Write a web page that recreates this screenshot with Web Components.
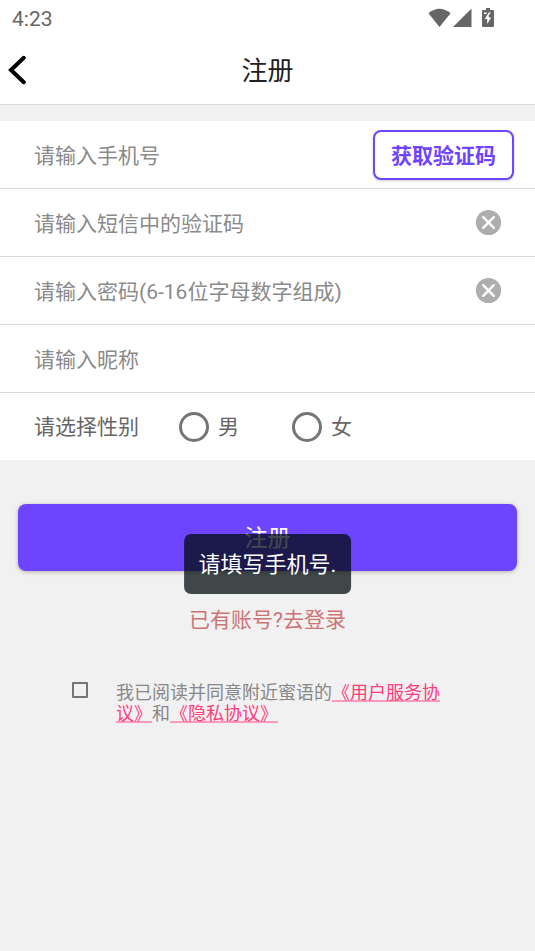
<!DOCTYPE html>
<html lang="zh-CN">
<head>
<meta charset="utf-8">
<meta name="viewport" content="width=device-width, initial-scale=1">
<title>注册</title>
<style>
  html { height: 100%; }
  body {
    margin: 0;
    min-height: 100%;
    background: #f1f1f1;
    color: #757575;
    font: 400 21px/30px Roboto, "Noto Sans CJK SC", sans-serif;
    --accent: #6e44ff;
    --line: #dadada;
  }
</style>
</head>
<body>
<register-page></register-page>

<script>
const define = (name, html, setup) => {
  const template = document.createElement('template');
  template.innerHTML = html;
  customElements.define(name, class extends HTMLElement {
    constructor() {
      super();
      this.attachShadow({ mode: 'open' }).append(template.content.cloneNode(true));
    }
    connectedCallback() {
      if (setup) setup(this, this.shadowRoot);
    }
  });
};

define('status-bar', `
  <style>
    :host { display: flex; align-items: center; justify-content: space-between; height: 36px; padding: 0 41px 0 12px; color: #666; font-size: 21px; }
    time { padding-top: 2px; }
    .icons { display: flex; align-items: center; gap: 2px; }
    svg { display: block; fill: currentColor; }
    .battery { margin-left: 8px; }
  </style>
  <time>4:23</time>
  <div class="icons">
    <svg width="23" height="20" viewBox="0 0 23 20" aria-label="Wi-Fi"><path d="M0.4 5.2Q11.5-3.8 22.6 5.2L11.5 19Z"/></svg>
    <svg width="19" height="20" viewBox="0 0 19 20" aria-label="信号"><path d="M18.5 0.5V19H0Z"/></svg>
    <svg class="battery" width="12" height="20" viewBox="0 0 12 20" aria-label="充电中"><path fill-rule="evenodd" d="M4 0H8V2H11Q12 2 12 3V18Q12 19 11 19H1Q0 19 0 18V3Q0 2 1 2H4ZM2 4.5V6H4.6V4.5ZM6.8 4.5L2.8 11H5.2V16L9.2 9.5H6.8V7L9 4.5Z"/></svg>
  </div>`);

define('nav-header', `
  <style>
    :host { display: grid; grid-template-columns: 48px 1fr 48px; align-items: center; height: 68px; border-bottom: 1px solid var(--line); }
    button { display: flex; align-items: center; height: 48px; padding: 0 0 0 8px; border: 0; background: none; color: #000; }
    h1 { margin: 0; padding-top: 2px; text-align: center; font-size: 26px; line-height: 36px; font-weight: inherit; color: #212121; }
  </style>
  <button type="button" aria-label="返回"><svg width="20" height="30" viewBox="0 0 20 30" fill="none" stroke="currentColor" stroke-width="4" stroke-linecap="round"><path d="M15.8 2.8L3 15L15.8 27.2"/></svg></button>
  <h1><slot></slot></h1>`);

define('form-row', `
  <style>
    :host { display: flex; align-items: center; height: 67px; padding: 0 21px 0 34px; background: #fff; border-bottom: 1px solid var(--line); }
    :host(:last-of-type) { border-bottom: 0; }
  </style>
  <slot></slot>`);

define('text-field', `
  <style>
    :host { display: flex; flex: 1; align-items: center; min-width: 0; }
    input { flex: 1; min-width: 0; height: 48px; padding: 2px 0 0; border: 0; outline: 0; background: none; font: inherit; color: #333; }
    input::placeholder { color: #8a8a8a; opacity: 1; }
    button { display: none; padding: 0; margin-right: 12px; border: 0; background: none; }
    :host([clearable]) button { display: block; }
    svg { display: block; }
  </style>
  <input>
  <button type="button" aria-label="清除"><svg width="27" height="27" viewBox="0 0 27 27"><circle cx="13.5" cy="13.5" r="12.6" fill="#aeaeae"/><path d="M8.2 8.2L18.8 18.8M18.8 8.2L8.2 18.8" stroke="#fff" stroke-width="2.4" stroke-linecap="round"/></svg></button>`,
  (host, root) => {
    const input = root.querySelector('input');
    input.type = host.getAttribute('type') || 'text';
    input.placeholder = host.getAttribute('placeholder');
    input.setAttribute('aria-label', input.placeholder);
    root.querySelector('button').onclick = () => { input.value = ''; input.focus(); };
  });

define('code-button', `
  <style>
    :host { display: block; }
    button { display: block; height: 50px; padding: 2px 16px 0; border: 2px solid var(--accent); border-radius: 8px; background: #fff; color: var(--accent); font: inherit; font-weight: 700; box-shadow: 0 1px 3px #0003; }
  </style>
  <button type="button"><slot></slot></button>`);

define('gender-picker', `
  <style>
    :host { display: block; }
    fieldset { display: flex; align-items: center; margin: 0; padding: 0; border: 0; color: #666; }
    legend { float: left; padding: 0; margin-right: 40px; }
    .options { display: flex; gap: 53px; }
    label { display: flex; align-items: center; gap: 9px; }
    input { appearance: none; box-sizing: border-box; width: 30px; height: 30px; margin: 0; border: 3px solid #757575; border-radius: 50%; }
    input:checked { background: radial-gradient(var(--accent) 45%, #fff 50%); }
  </style>
  <fieldset>
    <legend>请选择性别</legend>
    <div class="options">
      <label><input type="radio" name="gender" value="m">男</label>
      <label><input type="radio" name="gender" value="f">女</label>
    </div>
  </fieldset>`);

define('submit-button', `
  <style>
    :host { display: block; }
    button { display: block; width: 100%; height: 67px; padding: 2px 0 0; border: 0; border-radius: 8px; background: var(--accent); color: #fff; font: inherit; font-size: 23px; box-shadow: 0 1px 4px #0004; }
  </style>
  <button type="submit"><slot></slot></button>`);

define('toast-message', `
  <style>
    :host { position: absolute; z-index: 1; top: 30px; left: 50%; transform: translateX(-50%); padding: 16px 15px 14px; border-radius: 7px; background: rgba(0, 11, 14, .74); color: #fff; font-size: 22px; line-height: 30px; white-space: nowrap; }
  </style>
  <slot></slot>`);

define('login-link', `
  <style>
    :host { display: block; text-align: center; }
    a { color: #cc7474; text-decoration: none; }
  </style>
  <a href="#login"><slot></slot></a>`);

define('agreement-check', `
  <style>
    :host { display: flex; align-items: flex-start; gap: 28px; font-size: 18px; line-height: 21px; color: #888; }
    input { appearance: none; flex: none; box-sizing: border-box; width: 16px; height: 16px; margin: 0; border: 2px solid #757575; border-radius: 1px; }
    input:checked { background: var(--accent); }
    label { max-width: 330px; }
    a { color: #ff3b7c; text-decoration: underline; text-decoration-color: #fb9abc; text-decoration-thickness: 2px; text-underline-offset: 1px; text-decoration-skip-ink: none; }
  </style>
  <input type="checkbox" id="agree">
  <label for="agree">我已阅读并同意附近蜜语的<a href="#terms">《用户服务协议》</a>和<a href="#privacy">《隐私协议》</a></label>`);

define('register-page', `
  <style>
    :host { display: block; }
    .top { background: #fff; }
    form { display: flex; flex-direction: column; padding-top: 16px; }
    .actions { position: relative; margin: 44px 18px 0; }
    login-link { margin-top: 34px; }
    agreement-check { margin: 47px 72px 0; }
  </style>
  <div class="top">
    <status-bar></status-bar>
    <nav-header>注册</nav-header>
  </div>
  <form>
    <div>
      <form-row><text-field type="tel" placeholder="请输入手机号"></text-field><code-button>获取验证码</code-button></form-row>
      <form-row><text-field placeholder="请输入短信中的验证码" clearable></text-field></form-row>
      <form-row><text-field type="password" placeholder="请输入密码(6-16位字母数字组成)" clearable></text-field></form-row>
      <form-row><text-field placeholder="请输入昵称"></text-field></form-row>
      <form-row><gender-picker></gender-picker></form-row>
    </div>
    <div class="actions">
      <submit-button>注册</submit-button>
      <toast-message role="status">请填写手机号.</toast-message>
    </div>
    <login-link>已有账号?去登录</login-link>
    <agreement-check></agreement-check>
  </form>`);
</script>
</body>
</html>
